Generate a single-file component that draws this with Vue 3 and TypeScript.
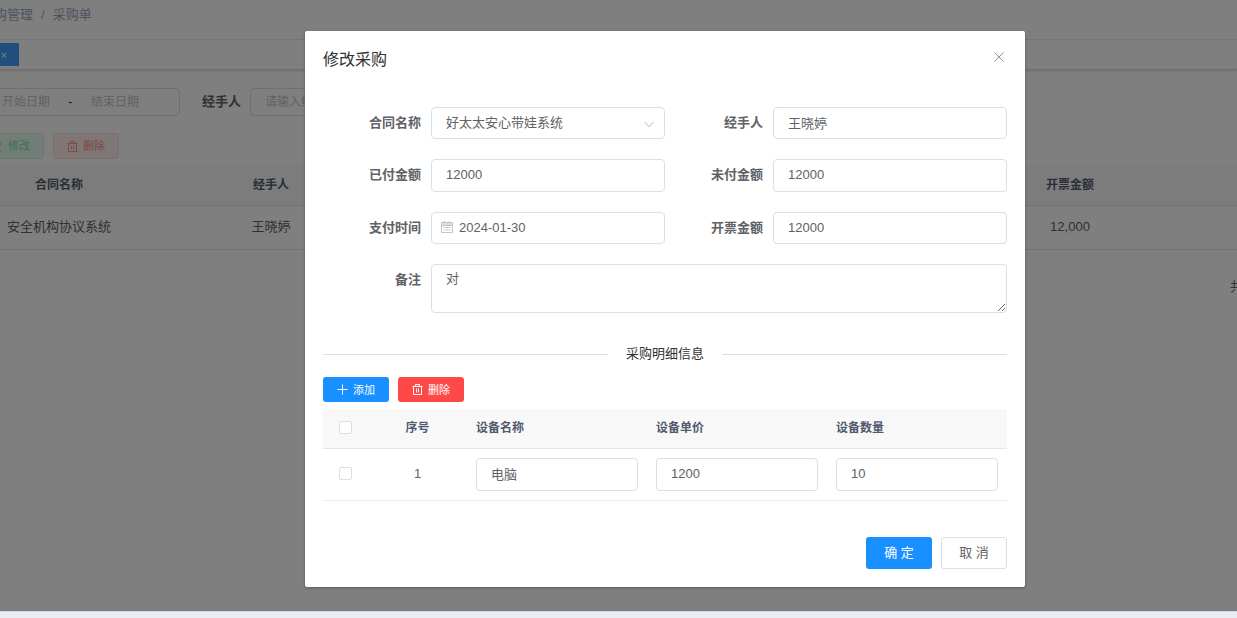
<script setup lang="ts">
import { reactive, ref } from 'vue'

interface PurchaseForm {
  contract: string
  handler: string
  paid: string
  unpaid: string
  payDate: string
  invoiced: string
  remark: string
}

interface DetailRow {
  name: string
  price: string
  count: string
  checked: boolean
}

const contracts: string[] = ['好太太安心带娃系统']

const form = reactive<PurchaseForm>({
  contract: '好太太安心带娃系统',
  handler: '王晓婷',
  paid: '12000',
  unpaid: '12000',
  payDate: '2024-01-30',
  invoiced: '12000',
  remark: '对',
})

const details = ref<DetailRow[]>([{ name: '电脑', price: '1200', count: '10', checked: false }])
const allChecked = ref(false)
const query = reactive({ start: '', end: '', handler: '' })

function toggleAll(): void {
  details.value.forEach((row) => (row.checked = allChecked.value))
}

function addRow(): void {
  details.value.push({ name: '', price: '', count: '', checked: false })
}

function removeRows(): void {
  details.value = details.value.filter((row) => !row.checked)
}
</script>

<template>
  <div class="root">
    <div class="stage">
      <div class="shell">
        <nav class="crumbs" aria-label="breadcrumb">
          <a href="#">采购管理</a>
          <span class="slash">/</span>
          <span>采购单</span>
        </nav>
        <div class="tabs">
          <div class="tab"><button type="button" class="tab-close" aria-label="关闭">×</button></div>
        </div>
        <form class="search" @submit.prevent>
          <div class="range">
            <input v-model="query.start" placeholder="开始日期" aria-label="开始日期" />
            <span class="dash">-</span>
            <input v-model="query.end" placeholder="结束日期" aria-label="结束日期" />
          </div>
          <label class="search-label" for="q-handler">经手人</label>
          <input id="q-handler" v-model="query.handler" class="search-input" placeholder="请输入经手人" />
        </form>
        <div class="toolbar">
          <button type="button" class="btn mini plain-green" disabled>
            <svg class="ico" viewBox="0 0 11 11"><path d="M1 10h9M2 8l.5-2L8 .8 9.6 2.400 4.200 7.600z" /></svg>
            <span>修改</span>
          </button>
          <button type="button" class="btn mini plain-red" disabled>
            <svg class="ico" viewBox="0 0 11 11"><path d="M.5 2.500h10M3.500 2.500v-2h4v2M1.500 2.500v8h8v-8M4.500 4.500v4M6.500 4.500v4" /></svg>
            <span>删除</span>
          </button>
        </div>
        <table class="list">
          <colgroup><col class="c-main" /><col class="c-main" /><col /><col class="c-main" /><col class="c-end" /></colgroup>
          <thead>
            <tr><th>合同名称</th><th>经手人</th><th></th><th>开票金额</th><th></th></tr>
          </thead>
          <tbody>
            <tr><td>安全机构协议系统</td><td>王晓婷</td><td></td><td>12,000</td><td></td></tr>
          </tbody>
        </table>
        <div class="pager">共</div>
      </div>

      <div class="mask">
        <section class="dialog" role="dialog" aria-labelledby="dlg-title">
          <header class="dlg-head">
            <h2 id="dlg-title">修改采购</h2>
            <button type="button" class="close" aria-label="关闭">
              <svg viewBox="0 0 10 10"><path d="M.5 .5l9 9M9.500 .5l-9 9" /></svg>
            </button>
          </header>

          <form class="form" @submit.prevent>
            <div class="item">
              <label for="contract">合同名称</label>
              <div class="control">
                <select id="contract" v-model="form.contract" class="field">
                  <option v-for="c in contracts" :key="c" :value="c">{{ c }}</option>
                </select>
                <svg class="chevron" viewBox="0 0 10 7"><path d="M.5 .8L5 5.800 9.500 .8" /></svg>
              </div>
            </div>
            <div class="item">
              <label for="handler">经手人</label>
              <div class="control"><input id="handler" v-model="form.handler" class="field" /></div>
            </div>
            <div class="item">
              <label for="paid">已付金额</label>
              <div class="control"><input id="paid" v-model="form.paid" class="field num" /></div>
            </div>
            <div class="item">
              <label for="unpaid">未付金额</label>
              <div class="control"><input id="unpaid" v-model="form.unpaid" class="field num" /></div>
            </div>
            <div class="item">
              <label for="pay-date">支付时间</label>
              <div class="control">
                <svg class="calendar" viewBox="0 0 12 12">
                  <path d="M.5 1.500h11v10H.5zM.5 4.500h11M3.500 0v2.500M8.500 0v2.500M2.500 6.500h2M5 6.500h2M7.500 6.500h2M2.500 9h2M5 9h2M7.500 9h2" />
                  <path class="calendar-top" d="M1 2h10v2H1z" />
                </svg>
                <input id="pay-date" v-model="form.payDate" class="field with-icon" />
              </div>
            </div>
            <div class="item">
              <label for="invoiced">开票金额</label>
              <div class="control"><input id="invoiced" v-model="form.invoiced" class="field" /></div>
            </div>
            <div class="item wide">
              <label for="remark">备注</label>
              <div class="control"><textarea id="remark" v-model="form.remark" class="field area" rows="2"></textarea></div>
            </div>
          </form>

          <div class="divider"><span>采购明细信息</span></div>

          <div class="actions">
            <button type="button" class="btn mini blue" @click="addRow">
              <svg class="ico" viewBox="0 0 11 11"><path d="M5.500 .5v10M.5 5.500h10" /></svg>
              <span>添加</span>
            </button>
            <button type="button" class="btn mini red" @click="removeRows">
              <svg class="ico" viewBox="0 0 11 11"><path d="M.5 2.500h10M3.500 2.500v-2h4v2M1.500 2.500v8h8v-8M4.500 4.500v4M6.500 4.500v4" /></svg>
              <span>删除</span>
            </button>
          </div>

          <table class="detail">
            <colgroup><col class="d-check" /><col class="d-index" /><col /><col /><col /></colgroup>
            <thead>
              <tr>
                <th class="mid"><input v-model="allChecked" type="checkbox" class="tick" aria-label="全选" @change="toggleAll" /></th>
                <th class="mid">序号</th>
                <th>设备名称</th>
                <th>设备单价</th>
                <th>设备数量</th>
              </tr>
            </thead>
            <tbody>
              <tr v-for="(row, i) in details" :key="i">
                <td class="mid"><input v-model="row.checked" type="checkbox" class="tick" aria-label="选择" /></td>
                <td class="mid">{{ i + 1 }}</td>
                <td><input v-model="row.name" class="field num" aria-label="设备名称" /></td>
                <td><input v-model="row.price" class="field num" aria-label="设备单价" /></td>
                <td><input v-model="row.count" class="field num" aria-label="设备数量" /></td>
              </tr>
            </tbody>
          </table>

          <footer class="dlg-foot">
            <button type="button" class="btn blue">确 定</button>
            <button type="button" class="btn white">取 消</button>
          </footer>
        </section>
      </div>
    </div>
    <div class="strip"></div>
  </div>
</template>

<style>
body {
  margin: 0;
}
</style>

<style scoped>
.root,
.root * {
  box-sizing: border-box;
}
.root {
  display: flex;
  flex-direction: column;
  min-height: 100vh;
  font: 13px/20px 'Liberation Sans', 'Noto Sans CJK SC', sans-serif;
  color: #606266;
}
.root button,
.root input,
.root select,
.root textarea {
  font-family: inherit;
  margin: 0;
}
.stage {
  flex: 1;
  position: relative;
  overflow: hidden;
  background: #fff;
}
.strip {
  height: 7px;
  background: #e9edf6;
  border-top: 1px solid #cbd8f0;
}

/* list page, scrolled a little to the right */
.shell {
  margin-left: -47px;
}
.crumbs {
  display: flex;
  gap: 8px;
  height: 40px;
  padding: 5px 0 0 28px;
  border-bottom: 1px solid #f0f0f2;
  color: #97a8be;
}
.crumbs a {
  color: inherit;
  text-decoration: none;
}
.slash {
  color: #aab0bb;
}
.tabs {
  height: 30px;
  padding: 3px 0 0 8px;
  border-bottom: 1px solid #d8dce5;
  box-shadow: 0 1px 3px rgba(0, 0, 0, 0.16);
}
.tab {
  display: flex;
  justify-content: flex-end;
  align-items: center;
  width: 58px;
  height: 23px;
  padding-right: 12px;
  background: #409eff;
}
.tab-close {
  padding: 0;
  border: 0;
  background: none;
  color: #fff;
  font-size: 11px;
  line-height: 12px;
}
.search {
  display: flex;
  align-items: center;
  padding: 18px 0 0 11px;
}
.range {
  display: flex;
  align-items: center;
  width: 216px;
  height: 28px;
  padding-left: 22px;
  border: 1px solid #dcdfe6;
  border-radius: 4px;
}
.range input {
  width: 78px;
  padding: 0;
  border: 0;
  background: none;
  font-size: 12px;
  text-align: center;
}
.range input::placeholder,
.search-input::placeholder {
  color: #c0c4cc;
}
.dash {
  width: 11px;
  text-align: center;
  color: #303133;
}
.search-label {
  margin: 0 9px 0 22px;
  font-weight: 700;
}
.search-input {
  width: 194px;
  height: 28px;
  padding: 0 14px;
  border: 1px solid #dcdfe6;
  border-radius: 4px;
  background: none;
  font-size: 12px;
}
.toolbar {
  display: flex;
  gap: 9px;
  padding: 17px 0 7px 25px;
}
.list {
  width: 100%;
  border-collapse: separate;
  border-spacing: 0;
  table-layout: fixed;
  text-align: center;
}
.c-main {
  width: 212px;
}
.c-end {
  width: 61px;
}
.list th {
  height: 40px;
  padding: 0 0 2px;
  background: #f8f8f9;
  border-bottom: 1px solid #dfe6ec;
  color: #515a6e;
  font-size: 12px;
}
.list td {
  height: 44px;
  padding: 0 0 2px;
  border-bottom: 1px solid #dfe6ec;
}
.pager {
  margin: 27px -6px 0 0;
  text-align: right;
}

/* buttons */
.btn {
  display: inline-flex;
  justify-content: center;
  align-items: center;
  gap: 5px;
  width: 66px;
  height: 32px;
  padding: 0;
  border: 1px solid transparent;
  border-radius: 3px;
  font-size: 13px;
  line-height: 16px;
}
.mini {
  height: 26px;
  font-size: 11px;
}
.ico {
  width: 11px;
  height: 11px;
  fill: none;
  stroke: currentColor;
}
.blue {
  background: #1890ff;
  color: #fff;
}
.red {
  background: #ff4949;
  color: #fff;
}
.white {
  background: #fff;
  border-color: #dcdfe6;
  color: #606266;
}
.plain-green {
  background: #e7faf0;
  border-color: #d0f5e0;
  color: #71e2a3;
}
.plain-red {
  background: #ffeded;
  border-color: #ffdbdb;
  color: #ff9292;
}

/* dialog */
.mask {
  position: absolute;
  inset: 0;
  display: flex;
  justify-content: center;
  align-items: flex-start;
  padding: 31px 0 24px 93px;
  background: rgba(0, 0, 0, 0.5);
}
.dialog {
  width: 720px;
  max-width: 100%;
  padding: 18px;
  border-radius: 2px;
  background: #fff;
  box-shadow: 0 1px 3px rgba(0, 0, 0, 0.3);
}
.dlg-head {
  display: flex;
  justify-content: space-between;
  align-items: flex-start;
  height: 58px;
}
.dlg-head h2 {
  margin: 0;
  font-size: 16px;
  font-weight: 400;
  line-height: 22px;
  color: #303133;
}
.close {
  display: flex;
  padding: 3px;
  border: 0;
  background: none;
}
.close svg {
  width: 10px;
  height: 10px;
  fill: none;
  stroke: #909399;
}
.form {
  display: grid;
  grid-template-columns: 1fr 1fr;
  row-gap: 20px;
}
.item {
  display: flex;
}
.wide {
  grid-column: 1 / -1;
}
.item label {
  flex: none;
  width: 108px;
  padding-right: 10px;
  text-align: right;
  font-weight: 700;
  line-height: 32px;
}
.control {
  flex: 1;
  position: relative;
  min-width: 0;
}
.field {
  display: block;
  width: 100%;
  height: 32px;
  padding: 0 14px 2px;
  border: 1px solid #dcdfe6;
  border-radius: 4px;
  outline: 0;
  background: #fff;
  color: #606266;
  font-size: 13px;
  appearance: none;
}
.num {
  height: 33px;
}
.with-icon {
  padding-left: 27px;
}
.area {
  height: 49px;
  padding-top: 5px;
  line-height: 18px;
  resize: vertical;
}
.chevron {
  position: absolute;
  right: 11px;
  top: 14px;
  width: 10px;
  height: 7px;
  fill: none;
  stroke: #b4b8c0;
  pointer-events: none;
}
.calendar {
  position: absolute;
  left: 10px;
  top: 9px;
  width: 12px;
  height: 12px;
  fill: none;
  stroke: #c0c4cc;
}
.calendar-top {
  fill: #dcdfe6;
  stroke: none;
}
.divider {
  display: flex;
  align-items: center;
  gap: 18px;
  margin: 31px 0 13px;
  color: #303133;
}
.divider::before,
.divider::after {
  content: '';
  flex: 1;
  height: 1px;
  background: #dcdfe6;
}
.actions {
  display: flex;
  gap: 9px;
  margin-bottom: 7px;
}
.actions .btn {
  height: 25px;
}
.detail {
  width: 100%;
  border-collapse: separate;
  border-spacing: 0;
  table-layout: fixed;
}
.d-check {
  width: 45px;
}
.d-index {
  width: 99px;
}
.detail th {
  height: 40px;
  padding: 0 9px 2px;
  background: #f8f8f9;
  border-bottom: 1px solid #dfe6ec;
  color: #515a6e;
  font-size: 12px;
  text-align: left;
}
.detail td {
  height: 52px;
  padding: 0 9px;
  border-bottom: 1px solid #e6ebf5;
}
.detail .mid {
  padding-bottom: 2px;
  text-align: center;
}
.tick {
  display: block;
  width: 13px;
  height: 13px;
  border: 1px solid #dcdfe6;
  border-radius: 2px;
  background: #fff;
  appearance: none;
}
.detail .tick {
  margin: 0 auto;
}
.tick:checked {
  background: #1890ff;
  border-color: #1890ff;
}
.dlg-foot {
  display: flex;
  justify-content: flex-end;
  gap: 9px;
  margin-top: 36px;
}
</style>
